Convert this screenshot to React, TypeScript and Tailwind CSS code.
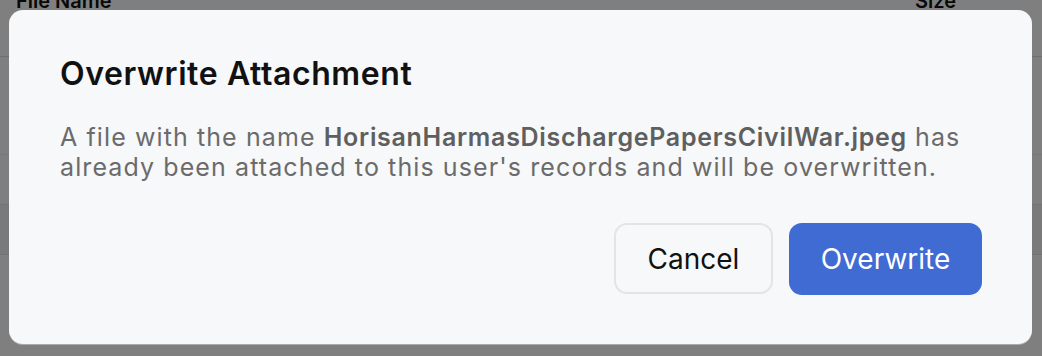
export default function App() {
  return (
    <div className="relative h-[356px] w-[1042px] overflow-hidden bg-white font-['Inter',sans-serif]">
      {/* page behind the dialog */}
      <div className="flex h-full flex-col">
        <div className="flex h-[57px] items-start justify-between border-b border-[#dcdcdc] px-[16px]">
          <span className="-mt-[14px] text-[20px] font-semibold text-[#111]">File Name</span>
          <span className="-mt-[14px] mr-[70px] text-[20px] font-semibold text-[#111]">Size</span>
        </div>
        <div className="h-[98px] border-b border-[#f0f0f0]" />
        <div className="h-[50px] border-b border-[#e6e6e6]" />
        <div className="h-[50px] border-b border-[#e6e6e6] bg-[#f4f4f4]" />
        <div className="flex-1" />
      </div>
      <div className="absolute inset-0 bg-black/50" />

      <div className="absolute left-[9px] top-[10px] flex h-[334px] w-[1023px] flex-col rounded-[14px] bg-[#f6f8fa] pl-[51px] pr-[16px] pt-[45px] shadow-[0_1px_0_rgba(255,255,255,0.35)]">
        <h2 className="text-[32px] font-semibold leading-[38px] tracking-[0.6px] text-[#111]">
          Overwrite Attachment
        </h2>
        <p className="mt-[29px] text-[25px] leading-[30px] tracking-[1.1px] text-[#6b6b6b]">
          A file with the name{" "}
          <span className="font-semibold tracking-[0.7px] text-[#5f5f5f]">
            HorisanHarmasDischargePapersCivilWar.jpeg
          </span>{" "}
          has already been attached to this user's records and will be overwritten.
        </p>
        <div className="mt-[41px] flex justify-end gap-[16px] pr-[34px]">
          <button
            type="button"
            className="h-[71px] w-[159px] rounded-[13px] border-2 border-[#e4e4e4] bg-[#f6f8fa] text-[28px] text-[#111]"
          >
            Cancel
          </button>
          <button
            type="button"
            className="h-[72px] w-[193px] rounded-[13px] bg-[#3f6bd2] text-[28px] text-white"
          >
            Overwrite
          </button>
        </div>
      </div>
    </div>
  );
}
